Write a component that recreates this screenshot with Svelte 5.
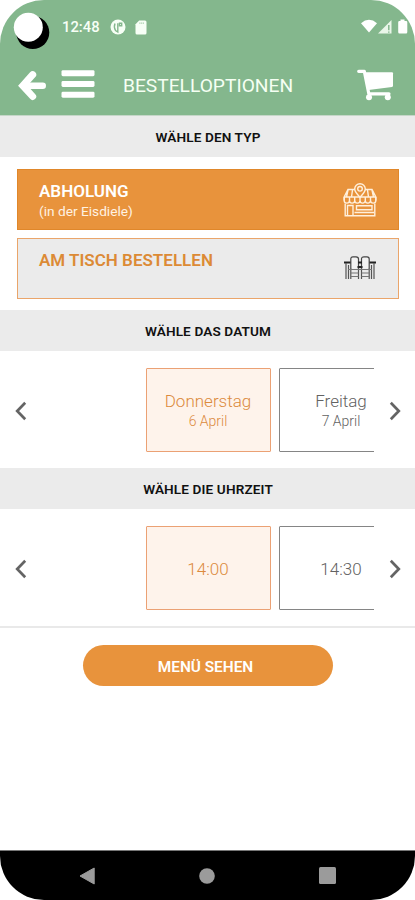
<script>
  const dates = [
    { title: 'Donnerstag', sub: '6 April', active: true },
    { title: 'Freitag', sub: '7 April', active: false }
  ];
  const times = [
    { title: '14:00', active: true },
    { title: '14:30', active: false }
  ];
</script>

{#snippet chevron(d)}
  <svg class="chev" width="12" height="20" viewBox="0 0 12 20"><path {d} fill="none" stroke="#646464" stroke-width="2.7" /></svg>
{/snippet}

{#snippet picker(items)}
  <div class="picker">
    <button class="arrow" aria-label="Zurück">{@render chevron('M10.2 1.8 2.2 10l8 8.2')}</button>
    <div class="track">
      {#each items as item}
        <div class="slot" class:active={item.active}>
          <span class="slot-title">{item.title}</span>
          {#if item.sub}<span class="slot-sub">{item.sub}</span>{/if}
        </div>
      {/each}
    </div>
    <button class="arrow" aria-label="Weiter">{@render chevron('M1.8 1.8 9.8 10l-8 8.2')}</button>
  </div>
{/snippet}

<div class="screen">
  <header>
    <div class="status">
      <svg class="camera" width="37" height="38" viewBox="0 0 37 38">
        <circle cx="19.8" cy="20.5" r="16.5" fill="#000" /><circle cx="15.3" cy="15.2" r="14.5" fill="#fff" />
      </svg>
      <span class="clock">12:48</span>
      <svg class="app-dot" width="16" height="16" viewBox="0 0 16 16">
        <circle cx="8" cy="8" r="7.5" fill="#f7fff6" />
        <path d="M5 4.500Q3.500 8 5.500 11.500L7.800 13V4.300M9.500 4.300h2.200v2.500H9.500z" fill="none" stroke="#84b78d" stroke-width="1.4" />
      </svg>
      <svg class="sd" width="12" height="15" viewBox="0 0 12 15">
        <path d="M4.200.5H10q1.500 0 1.500 1.500v11q0 1.500-1.500 1.500H2Q.5 14.500.5 13V4.200z" fill="#f7fff6" />
        <path d="M4.300 3.200h4.700" stroke="#a9cfae" stroke-width="1.3" stroke-dasharray="1.2 .6" />
      </svg>
      <svg class="signals" width="48" height="16" viewBox="0 0 48 16">
        <path d="M0 4.200Q8 -2.600 16 4.200L8 13.500z" fill="#fff" />
        <path d="M17 14.500 30.500 1v13.500z" fill="#e9f6e9" />
        <path d="M27.800 6v5.300M27.800 12.500v1.300" stroke="#84b78d" stroke-width="1.5" />
        <path d="M39.500 2V.5h4V2H45q1.300 0 1.300 1.300v9.700q0 1.500-1.300 1.500h-6.500q-1.300 0-1.300-1.500V3.300Q37.200 2 38.500 2z" fill="#fff" />
      </svg>
    </div>
    <div class="bar">
      <svg class="back" width="30" height="32" viewBox="0 0 30 32">
        <path d="M15.700 4.700 5.800 15.700l9.900 10.800" fill="none" stroke="#fff" stroke-width="7" stroke-linejoin="miter" stroke-linecap="round" />
        <path d="M7 15.700h18.800" stroke="#fff" stroke-width="6.400" stroke-linecap="round" />
      </svg>
      <svg class="burger" width="34" height="29" viewBox="0 0 34 29">
        <g fill="#fff"><rect x=".5" y=".2" width="33" height="6" rx="1.400" /><rect x=".5" y="11" width="33" height="6" rx="1.400" /><rect x=".5" y="21.700" width="33" height="6" rx="1.400" /></g>
      </svg>
      <h1>BESTELLOPTIONEN</h1>
      <svg class="cart" width="37" height="32" viewBox="0 0 37 32">
        <path d="M1.700 2.300H7.300L11.800 24.800H32" fill="none" stroke="#fff" stroke-width="3.200" stroke-linejoin="round" stroke-linecap="round" />
        <path d="M8 3.300H35q1 0 1 1v12.400q0 1-1 1.200L11.500 21z" fill="#fff" />
        <circle cx="12" cy="28.200" r="3" fill="#fff" /><circle cx="30.800" cy="28.200" r="3" fill="#fff" />
      </svg>
    </div>
  </header>

  <h2><span>WÄHLE DEN TYP</span></h2>
  <section class="types">
    <div class="card selected">
      <div><div class="name">ABHOLUNG</div><div class="note">(in der Eisdiele)</div></div>
      <svg class="shop" width="34" height="34" viewBox="0 0 34 34" fill="none" stroke="#fff0dc" stroke-width="1.4">
        <path d="M11.500 6.500H5L1.200 14v3.500M22 6.500h7L32.800 14v3.500M1.200 14h31.600M5 7l-1.500 7M9.500 7 8.500 14M24.500 7l1 7M29 7l1.500 7" />
        <path d="M17 14.500c-2.500-3.200-5.300-5.500-5.300-8.500a5.300 5.300 0 0 1 10.600 0c0 3-2.800 5.300-5.300 8.500z" fill="#e8933c" />
        <circle cx="17" cy="5.800" r="2.300" />
        <path d="M1.200 14v3.500a2.600 2.600 0 0 0 5.270 0a2.600 2.600 0 0 0 5.270 0a2.600 2.600 0 0 0 5.270 0a2.600 2.600 0 0 0 5.270 0a2.600 2.600 0 0 0 5.270 0a2.600 2.600 0 0 0 5.270 0V14M6.500 14v3.500M11.700 14v3.500M17 14v3.500M22.300 14v3.500M27.500 14v3.500" />
        <path d="M2.200 20.500v12.300h29.600V20.500M4.500 32V22.500h5.500V32M13.500 22.800h15.500v4H13.500zM11.500 29.500h19.500" />
      </svg>
    </div>
    <div class="card">
      <div class="name">AM TISCH BESTELLEN</div>
      <svg class="table" width="32" height="24" viewBox="0 0 32 24" fill="none" stroke="#444" stroke-width="1.2">
        <path d="M6.800 12.500V3Q6.800.8 9 .8h3Q14.500.8 14.500 3v9.500M17.500 12.500V3Q17.500.8 20 .8h3q2.200 0 2.200 2.200v9.500" fill="#f2f2f2" />
        <path d="M0 6.500h6.500M14 6.500h4M25.500 6.500H32M13.500 11h5" stroke-width="2" stroke="#222" />
        <path d="M2 7v16M4.500 9v14M6.800 12v11M14.500 12v11M17.500 12v11M25.200 12v11M27.500 9v14M30 7v16" stroke="#555" />
        <path d="M4 13.500h24M6.500 17h8M17.500 17h8M6.500 20.500h8M17.500 20.500h8" stroke="#777" />
      </svg>
    </div>
  </section>

  <h2><span>WÄHLE DAS DATUM</span></h2>
  {@render picker(dates)}
  <h2><span>WÄHLE DIE UHRZEIT</span></h2>
  {@render picker(times)}

  <div class="action"><button class="cta"><span>MENÜ SEHEN</span></button></div>

  <nav>
    <svg width="16" height="18" viewBox="0 0 16 18"><path d="M1 9 15.200 1v16z" fill="#9b9b9b" stroke="#9b9b9b" stroke-linejoin="round" /></svg>
    <svg width="16" height="16" viewBox="0 0 16 16"><circle cx="8" cy="8" r="7.800" fill="#9b9b9b" /></svg>
    <svg width="17" height="17" viewBox="0 0 17 17"><rect width="17" height="17" rx="1.500" fill="#9b9b9b" /></svg>
  </nav>
</div>

<style>
  :global(body) { margin: 0; background: #fff; }
  .screen {
    width: 415px; height: 900px; box-sizing: border-box; overflow: hidden;
    display: flex; flex-direction: column; background: #fff;
    font-family: Roboto, "Liberation Sans", sans-serif; line-height: 1;
    border-radius: 44px;
  }
  svg { display: block; flex: none; }
  header { height: 116px; box-sizing: border-box; background: #84b78d; flex: none; border-bottom: 1px solid #c5d6c8; }
  .status { height: 55px; display: flex; align-items: flex-start; color: #f7fff6; }
  .camera { margin: 12px 0 0 13px; }
  .clock { margin: 20px 0 0 12px; width: 37px; font-size: 14.8px; font-weight: 500; white-space: nowrap; }
  .app-dot { margin: 19px 0 0 11px; }
  .sd { margin: 20px 0 0 9px; }
  .signals { margin: 19px 0 0 auto; width: 48px; padding-right: 6px; }
  .bar { height: 60px; display: flex; align-items: flex-start; }
  .back { margin: 15px 0 0 17px; }
  .burger { margin: 15px 0 0 14px; }
  h1 { margin: 21px 0 0 28px; font-size: 19.2px; line-height: 20px; font-weight: 400; color: #f5fff3; white-space: nowrap; }
  .cart { margin: 14px 21px 0 auto; }
  h2 {
    margin: 0; height: 41px; flex: none; background: #ebebeb; color: #111;
    display: flex; align-items: center; justify-content: center; padding: 2px 0 0 1px; box-sizing: border-box;
    font-size: 13.6px; letter-spacing: .12px; font-weight: 600; white-space: nowrap;
  }
  .types { flex: none; height: 153px; padding: 12px 16px 0 17px; box-sizing: border-box; display: flex; flex-direction: column; gap: 8px; }
  .card {
    height: 61px; box-sizing: border-box; border: 1px solid #eaa56a; background: #ebebeb;
    padding: 12px 21px 0 21px; display: flex; justify-content: space-between; color: #dc8a35;
  }
  .selected { background: #e8933c; border-color: #e0872a; color: #fff; }
  .name { font-size: 17px; line-height: 19px; font-weight: 600; white-space: nowrap; }
  .note { margin-top: 2px; font-size: 13.7px; line-height: 16px; color: #fff2e2; }
  .shop { margin-top: 1px; }
  .table { margin: 5px 1px 0 0; }
  .picker { height: 117px; flex: none; display: flex; align-items: center; justify-content: space-between; }
  .arrow { border: 0; background: none; padding: 2px 14px 0 15px; width: 41px; height: 40px; display: flex; align-items: center; }
  .track { width: 333px; height: 84px; padding-left: 104.5px; box-sizing: border-box; display: flex; gap: 8px; overflow: hidden; }
  .slot {
    flex: none; width: 125px; height: 84px; box-sizing: border-box; border: 1px solid #858585; border-radius: 1px;
    display: flex; flex-direction: column; align-items: center; justify-content: center; padding-top: 2px; color: #626262;
  }
  .slot.active { border-color: #eba174; background: #fef3eb; color: #dc8a3c; }
  .slot-title { font-size: 17px; line-height: 20px; font-weight: 300; }
  .slot-sub { margin-top: 2px; font-size: 14px; line-height: 17px; font-weight: 300; }
  .action { flex: 1; border-top: 2px solid #e9e9e9; display: flex; justify-content: center; align-items: flex-start; padding-top: 17px; }
  .cta {
    width: 250px; height: 41px; border: 0; border-radius: 21px; background: #e8933c; color: #fff; padding: 2px 4px 0 0;
    font: 600 15.4px/18px Roboto, "Liberation Sans", sans-serif;
  }
  nav { height: 50px; flex: none; background: #000; display: flex; align-items: center; justify-content: space-between; padding: 0 79px; box-sizing: border-box; border-top: 1px solid #777; }
</style>
